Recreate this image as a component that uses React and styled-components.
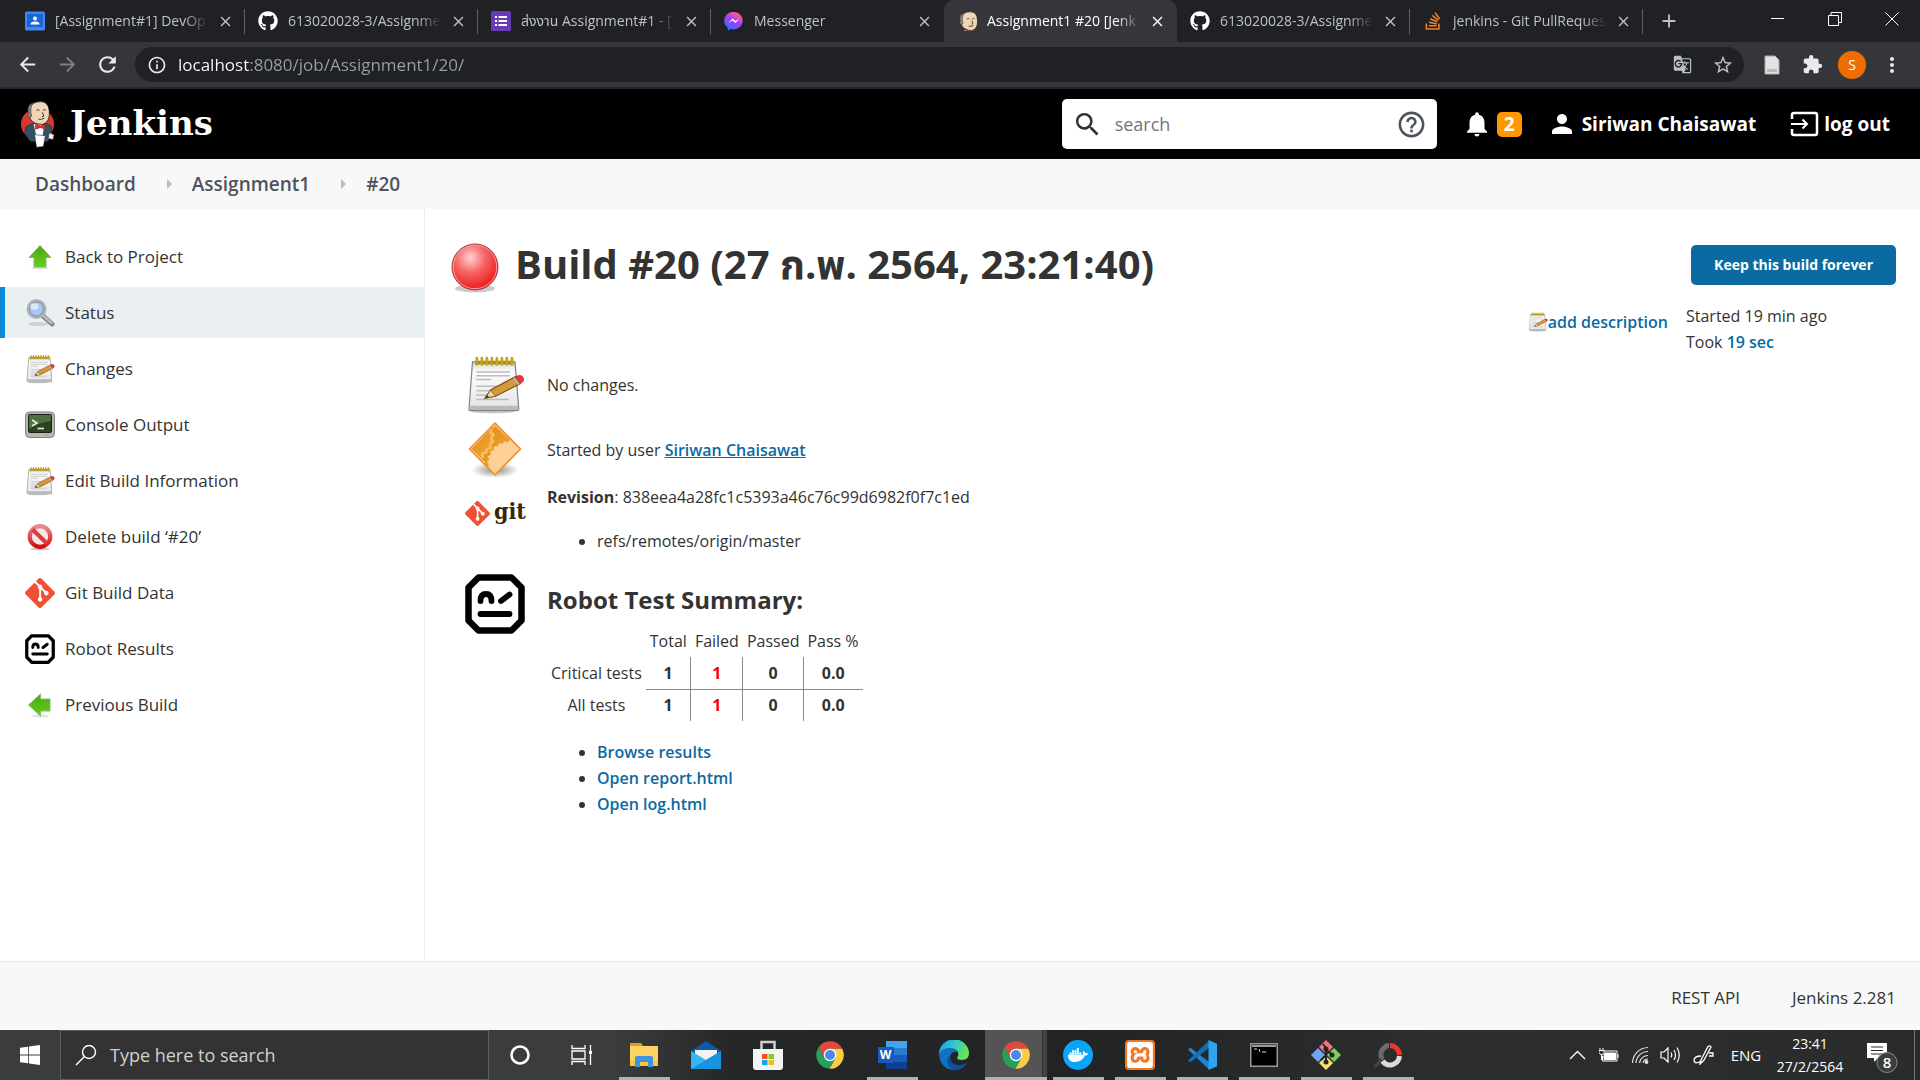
import React from "react";
import styled, { createGlobalStyle, css } from "styled-components";
import { FaGithub, FaStackOverflow, FaDocker } from "react-icons/fa";
import {
  MdGTranslate,
  MdStarBorder,
  MdExtension,
  MdMoreVert,
  MdNotifications,
  MdPerson,
  MdHelpOutline,
  MdSearch,
  MdClose,
  MdAdd,
  MdArrowBack,
  MdArrowForward,
  MdRefresh,
  MdInfoOutline,
} from "react-icons/md";
import { SiXampp, SiGit } from "react-icons/si";

const Global = createGlobalStyle`
  * { box-sizing: border-box; }
  body {
    margin: 0;
    background: #fff;
    color: #333;
    font-family: "Segoe UI", "Open Sans", "Noto Sans", "Noto Sans Thai", sans-serif;
    font-size: 16px;
    line-height: 26px;
  }
  button, input { font: inherit; color: inherit; border: 0; padding: 0; background: none; outline: 0; }
  button { cursor: pointer; }
  a { color: inherit; text-decoration: none; }
  ul, ol { margin: 0; padding: 0; list-style: none; }
  h1, h2, p { margin: 0; }
  svg { display: block; flex: none; }
`;

const Screen = styled.div`
  min-height: 100vh;
  display: flex;
  flex-direction: column;
`;

/* ---------- Browser chrome ---------- */

const TabStrip = styled.div`
  display: flex;
  height: 42px;
  padding-left: 12px;
  background: #202124;
`;

const Tab = styled.div`
  display: flex;
  align-items: center;
  flex: 0 1 233px;
  min-width: 0;
  padding: 0 12px 0 13px;
  background: linear-gradient(#5f6368, #5f6368) right center / 1px 25px no-repeat;
  color: #bdc1c6;
  ${(p) => p.$plain && css`background: none;`}
  ${(p) => p.$active && css`
    background: #35363a;
    color: #fff;
    border-radius: 10px 10px 0 0;
  `}
`;

const TabTitle = styled.button`
  flex: 1;
  min-width: 0;
  margin: 0 8px 0 10px;
  overflow: hidden;
  text-align: left;
  white-space: nowrap;
  font-size: 14px;
  mask-image: linear-gradient(90deg, #000 84%, transparent);
`;

const IconButton = styled.button`
  display: grid;
  place-items: center;
  width: ${(p) => p.$w || 16}px;
  flex: none;
`;

const NewTab = styled(IconButton)`
  margin-left: 14px;
  width: 24px;
  color: #bdc1c6;
`;

const WindowControls = styled.div`
  display: flex;
  margin-left: auto;
  color: #fff;
  button { width: 57px; padding-bottom: 4px; }
`;

const Toolbar = styled.div`
  display: flex;
  align-items: center;
  height: 47px;
  padding: 0 16px 0 14px;
  background: #35363a;
  border-bottom: 2px solid #27282b;
  color: #e8eaed;
`;

const NavButtons = styled.div`
  display: flex;
  gap: 13px;
  margin-right: 14px;
  button { width: 27px; }
  button:nth-child(2) { color: #7d7f83; }
`;

const Omnibox = styled.label`
  display: flex;
  align-items: center;
  flex: 1;
  height: 35px;
  padding: 0 12px;
  border-radius: 18px;
  background: #202124;
`;

const UrlInput = styled.input`
  flex: 1;
  margin-left: 11px;
  font-size: 17px;
  color: transparent;
  background: linear-gradient(90deg, #fff 72px, #9aa0a6 72px);
  background-clip: text;
  -webkit-background-clip: text;
`;

const OmniActions = styled.div`
  display: flex;
  gap: 20px;
  color: #bdc1c6;
  button { width: 20px; }
`;

const Extensions = styled.div`
  display: flex;
  align-items: center;
  gap: 16px;
  margin-left: 16px;
  button { width: 24px; }
`;

const Avatar = styled.button`
  height: 28px;
  margin: 0 -2px;
  border-radius: 50%;
  background: #ef6c00;
  color: #fff;
  font-size: 14px;
  && { width: 28px; }
`;

/* ---------- Jenkins header ---------- */

const Header = styled.header`
  display: flex;
  align-items: center;
  height: 70px;
  padding: 0 30px 0 20px;
  background: #000;
  color: #fff;
  font-size: 19px;
  font-weight: 700;
`;

const Logo = styled.a`
  display: flex;
  align-items: center;
  gap: 14px;
  margin-right: auto;
  font: 700 34px/44px "DejaVu Serif", serif;
  span { padding-bottom: 2px; }
`;

const SearchBox = styled.label`
  display: flex;
  align-items: center;
  width: 375px;
  height: 50px;
  margin-right: 25px;
  padding: 0 10px;
  border-radius: 5px;
  background: #fff;
  color: #333;
  font-size: 18px;
  font-weight: 400;
  input { flex: 1; min-width: 0; margin: 0 12px; }
  input::placeholder { color: #757575; opacity: 1; }
`;

const HeaderLink = styled.a`
  display: flex;
  align-items: center;
  gap: ${(p) => p.$gap || 5}px;
  margin-left: ${(p) => p.$ml || 0}px;
  white-space: nowrap;
`;

const Badge = styled.span`
  width: 25px;
  height: 25px;
  border-radius: 5px;
  background: #ff9800;
  line-height: 25px;
  text-align: center;
`;

const Breadcrumbs = styled.ol`
  display: flex;
  align-items: center;
  height: 50px;
  padding-left: 35px;
  background: #f8f8f8;
  color: #4d545d;
  font-size: 19px;
  font-weight: 600;
  li { display: flex; align-items: center; }
  li + li::before {
    content: "";
    margin: 0 20px 0 31px;
    border: 5px solid transparent;
    border-left-color: #bbb;
    border-right-width: 0;
  }
`;

/* ---------- Page body ---------- */

const Body = styled.div`
  display: flex;
  flex: 1;
`;

const Side = styled.nav`
  width: 425px;
  flex: none;
  padding-top: 22px;
  border-right: 1px solid #eaeff2;
`;

const SideList = styled.ul`
  display: grid;
  gap: 5px;
`;

const Task = styled.a`
  display: flex;
  align-items: center;
  gap: 10px;
  height: 51px;
  padding-left: 20px;
  border-left: 5px solid transparent;
  font-size: 17px;
  ${(p) => p.$active && css`
    background: #eaeff2;
    border-left-color: #0b8bd8;
  `}
`;

const Main = styled.main`
  flex: 1;
  min-width: 0;
  padding: 34px 24px 60px 26px;
`;

const TitleRow = styled.div`
  display: flex;
  align-items: flex-start;
  justify-content: space-between;
`;

const Title = styled.h1`
  display: flex;
  gap: 16px;
  font-size: 40px;
  font-weight: 700;
  line-height: 42px;
`;

const BuildActions = styled.div`
  display: flex;
  flex-direction: column;
  align-items: flex-end;
  gap: 18px;
  padding-top: 2px;
`;

const KeepButton = styled.button`
  height: 40px;
  padding: 0 23px;
  border-radius: 5px;
  background: #0b6aa2;
  color: #fff;
  font-size: 14px;
  font-weight: 700;
`;

const Meta = styled.div`
  display: flex;
  gap: 18px;
`;

const Timing = styled.div`
  width: 210px;
`;

const Link = styled.a`
  color: #0b6aa2;
  font-weight: 600;
  text-decoration: ${(p) => (p.$underline ? "underline" : "none")};
`;

const AddDescription = styled(Link)`
  display: flex;
  align-items: center;
  height: 38px;
`;

const Summary = styled.section`
  display: grid;
  grid-template-columns: 60px 1fr;
  column-gap: 22px;
  align-items: ${(p) => (p.$top ? "start" : "center")};
  margin: ${(p) => p.$mt || 0}px 0 0 14px;
`;

const Bullets = styled.ul`
  margin-top: 18px;
  padding-left: 50px;
  list-style: disc;
`;

const GitMark = styled.div`
  display: flex;
  align-items: center;
  height: 58px;
  gap: 4px;
  color: #362701;
  font: 700 23px/30px "DejaVu Serif Condensed", "DejaVu Serif", serif;
  span { padding-bottom: 4px; }
`;

const SubTitle = styled.h2`
  padding-top: 8px;
  font-size: 24px;
  font-weight: 700;
  line-height: 36px;
`;

const Results = styled.table`
  margin-top: 7px;
  border-collapse: collapse;
  text-align: center;
  th { padding: 0 4px; font-weight: 400; height: 32px; }
  td { padding: 0 4px; font-weight: 700; height: 32px; }
  td + td { border-left: 1px solid #888; }
  tbody tr:first-child td { border-bottom: 1px solid #888; }
`;

const FailCell = styled.td`
  color: #f00;
`;

const Footer = styled.footer`
  display: flex;
  justify-content: flex-end;
  align-items: center;
  gap: 52px;
  height: 69px;
  padding: 4px 24px 0 0;
  border-top: 1px solid #e8e8e8;
  background: #f8f8f8;
  font-size: 17px;
`;

/* ---------- Windows taskbar ---------- */

const Taskbar = styled.div`
  display: flex;
  height: 50px;
  background: linear-gradient(90deg, #3b3d3d 0, #3b3d3d 32%, #262727 38%, #222324 55%, #2c2d2d 75%, #2a2c2c);
  color: #fff;
`;

const StartButton = styled(IconButton)`
  width: 60px;
`;

const TaskSearch = styled.label`
  display: flex;
  align-items: center;
  gap: 13px;
  width: 429px;
  padding-left: 14px;
  background: #333;
  border: 1px solid #5d5d5d;
  font-size: 18px;
  input { flex: 1; }
  input::placeholder { color: #d0d0d0; opacity: 1; }
`;

const TaskButton = styled.button`
  display: grid;
  place-items: center;
  flex: 0 0 62px;
  ${(p) => p.$open && css`
    background: linear-gradient(#b4b0ae, #b4b0ae) center bottom / 51px 3px no-repeat;
  `}
  ${(p) => p.$active && css`
    background: linear-gradient(90deg, #545454 57px, #303030 57px, #303030 58px, #434343 58px);
    border-bottom: 3px solid #b4b0ae;
    padding-top: 3px;
  `}
`;

const Tray = styled.div`
  display: flex;
  align-items: center;
  margin-left: auto;
  font-size: 15px;
`;

const TrayButton = styled.button`
  display: grid;
  place-items: center;
  width: ${(p) => p.$w || 31}px;
`;

const Clock = styled.time`
  width: 80px;
  text-align: center;
  line-height: 23px;
  font-size: 14px;
`;

const ShowDesktop = styled.button`
  width: 6px;
  height: 50px;
  border-left: 1px solid #777;
`;

/* ---------- Drawings ---------- */

const Notepad = ({ size = 30 }) => (
  <svg width={size} height={size} viewBox="0 1 48 48">
    <defs>
      <linearGradient id="paper" x1="0" y1="0" x2="0" y2="1">
        <stop offset="0" stopColor="#d6d6d6" />
        <stop offset="0.2" stopColor="#fcfcfc" />
        <stop offset="1" stopColor="#e4e4e4" />
      </linearGradient>
    </defs>
    <ellipse cx="22" cy="46" rx="17" ry="1.8" fill="#000" opacity="0.2" />
    <path d="M6 6.500h34l3 37.500q.2 1.500-1.300 1.500H4.500q-1.500 0-1.300-1.500z" fill="url(#paper)" stroke="#858585" />
    <path d="M3.800 41.500h38.600l.3 3.500H3.500z" fill="#b9b9b9" />
    <g stroke="#bcbcbc" strokeWidth="1.200">
      <path d="M9 14.500h27M9 17.500h27M9 20.500h12M9 26h20M9 29.500h15M9 33h13M9 36.500h26" />
    </g>
    <path d="M8 5.500h31v3H8z" fill="#9f8d20" />
    <g stroke="#c2a51d" strokeWidth="2.200" strokeLinecap="round">
      <path d="M9.500 3.500v5M13.500 3.500v5M17.500 3.500v5M21.500 3.500v5M25.500 3.500v5M29.500 3.500v5M33.500 3.500v5M37.500 3.500v5" />
    </g>
    <path d="M16 35.500l4.500-6.500L40 18.500l4 5.500-19.500 10z" fill="#d29a3c" stroke="#80520d" />
    <path d="M20.500 29l4 5-8.500 1.500z" fill="#ecd3a5" stroke="#80520d" strokeWidth=".6" />
    <path d="M16 35.500l1.800-2.600 1.500 1.900z" fill="#333" />
    <path d="M38.500 19.300l4 5.500 1.500-.8-4-5.500z" fill="#bbb" />
    <path d="M40 18.500q5-2.500 6.500.5t-2.500 5z" fill="#df3b33" stroke="#a22" strokeWidth=".5" />
  </svg>
);

const GreenArrow = ({ left }) => (
  <svg width="30" height="30" viewBox="0 0 30 30">
    <defs>
      <linearGradient id={left ? "greenL" : "greenU"} x1={left ? 1 : 0} y1="0" x2={left ? 0 : 0} y2={left ? 0 : 1}>
        <stop offset="0" stopColor="#4fa618" />
        <stop offset="1" stopColor="#62cf18" />
      </linearGradient>
    </defs>
    <ellipse cx="15" cy="26" rx="9" ry="1.500" fill="#000" opacity="0.12" />
    <path
      d="M15 3.500L26 15.500H21V25H9V15.500H4z"
      fill={left ? "url(#greenL)" : "url(#greenU)"}
      stroke="#83bd68"
      transform={left ? "rotate(-90 15 15)" : undefined}
    />
  </svg>
);

const Magnifier = () => (
  <svg width="30" height="30" viewBox="0 0 30 30">
    <ellipse cx="13" cy="26" rx="10" ry="2" fill="#000" opacity="0.12" />
    <path d="M18 18l9 8" stroke="#848484" strokeWidth="5" strokeLinecap="round" />
    <path d="M18.500 18l8 7" stroke="#bdbdbd" strokeWidth="2.500" strokeLinecap="round" />
    <circle cx="11.500" cy="11" r="8.500" fill="#a9c8ee" stroke="#b3b3b3" strokeWidth="3" />
    <circle cx="11.500" cy="11" r="7" fill="none" stroke="#6d93c7" />
    <ellipse cx="9.500" cy="8.500" rx="4" ry="3.200" fill="#dbe9fa" />
  </svg>
);

const ConsoleIcon = () => (
  <svg width="30" height="30" viewBox="0 0 30 30">
    <rect x="0.500" y="2" width="29" height="25.500" rx="4" fill="#b7b8b3" stroke="#85867f" />
    <rect x="3.500" y="4.500" width="23" height="18" rx="1" fill="#2c4222" stroke="#1b2117" />
    <path d="M4 5h22v6q-12 1-22 8z" fill="#52703f" />
    <path d="M7 10l5 3-5 3" fill="none" stroke="#e6f0e0" strokeWidth="1.600" />
    <path d="M12.500 18.500h6.500" stroke="#e6f0e0" strokeWidth="1.600" />
    <path d="M20 25h3" stroke="#7ac143" />
  </svg>
);

const Forbidden = () => (
  <svg width="30" height="30" viewBox="0 0 30 30">
    <defs>
      <linearGradient id="ban" x1="0" y1="0" x2="0" y2="1">
        <stop offset="0" stopColor="#ee8a8a" />
        <stop offset="1" stopColor="#d30d0d" />
      </linearGradient>
    </defs>
    <ellipse cx="15" cy="27" rx="10" ry="1.500" fill="#000" opacity="0.2" />
    <circle cx="15" cy="14.500" r="10.300" fill="#f3e6e6" stroke="url(#ban)" strokeWidth="4.200" />
    <path d="M7.500 7.500l15 14.500" stroke="#dd3b3b" strokeWidth="4" />
  </svg>
);

const GitDiamond = ({ size = 30 }) => <SiGit size={size} color="#f05033" />;

const RobotFace = ({ size = 30 }) => (
  <svg width={size} height={size} viewBox="0 0 60 60" fill="none" stroke="#000">
    <path d="M13.500 3.500h33l10 10v33l-10 10h-33l-10-10v-33z" fill="#fff" strokeWidth="6.500" strokeLinejoin="round" />
    <path d="M15.500 27q0-7 5.500-7t5.500 7M36 27l8.500-6.500M15.500 40h29" strokeWidth="5.800" strokeLinecap="round" />
  </svg>
);

const RedBall = () => (
  <svg width="48" height="50" viewBox="0 0 48 50">
    <defs>
      <radialGradient id="ball" cx="0.400" cy="0.300" r="0.650">
        <stop offset="0" stopColor="#ffd2d2" />
        <stop offset="0.500" stopColor="#f76565" />
        <stop offset="1" stopColor="#ef2323" />
      </radialGradient>
    </defs>
    <ellipse cx="24" cy="45.500" rx="20" ry="4" fill="#000" opacity="0.200" />
    <circle cx="24" cy="24" r="23" fill="url(#ball)" stroke="#a33a3a" />
    <circle cx="24" cy="24" r="21.700" fill="none" stroke="#ff9b9b" />
  </svg>
);

const OrangeDiamond = () => (
  <svg width="60" height="60" viewBox="0 0 60 60">
    <defs>
      <radialGradient id="shade">
        <stop offset="0" stopColor="#000" stopOpacity=".45" />
        <stop offset="1" stopColor="#000" stopOpacity="0" />
      </radialGradient>
      <linearGradient id="amber" x1="0" y1="0" x2="1" y2="1">
        <stop offset="0" stopColor="#e08e12" />
        <stop offset="1" stopColor="#f0a63c" />
      </linearGradient>
    </defs>
    <ellipse cx="30" cy="50" rx="24" ry="8" fill="url(#shade)" />
    <path d="M30 3L55.500 29 30 55 4.500 29z" fill="#fcd193" stroke="#ee8f25" strokeWidth="1.600" strokeLinejoin="round" />
    <path d="M28 6.500L6.500 29l10 9.500 2-4 3.500 0 0-4 4-1-1-4 3.500-2-2-3.500 3-2.500-2.500-3 2.500-3z" fill="url(#amber)" />
    <path d="M30 5.500l15 14.500-2.500 2.500-3-1.500-2 3-3.500-1-1 3.500-4 0 0 3.500-4 1 1 3.500-3.500 2 2 3-2.500 2.500 2 3-2 3-3-3 1-3.500-3.500-2 2.500-3-1.500-3.500 4-1 0-4 4-1-1-4 4-2-2-4 3-2.500-2-3.500z" fill="url(#amber)" />
    <path d="M26.500 9.500l-1 3 2.500 3-2 3 2 3-3 2.500 1 3.500-4 1.500-.5 3.500-3.500.5-1.500 3.500" fill="none" stroke="#f7bd66" strokeWidth="2.500" />
  </svg>
);

const Butler = ({ head, w = 36, h = 48 }) => (
  <svg width={w} height={h} viewBox={head ? "5 0 24 25" : "0 0 37 48"}>
    {!head && <ellipse cx="18" cy="24" rx="17" ry="16" fill="#d33833" />}
    <path d="M6 27l8-4 6 5 6-5 6 3 1 10-5 6H11q-5-5-6-9z" fill="#335061" stroke="#1d2a33" strokeWidth=".7" />
    <path d="M14 24l3 13h6l2-12z" fill="#fff" />
    <path d="M10 8q2-7 11-7 8 0 9 9 1 10-4 13-3 2.500-7 1-7-1-9-7z" fill="#f0d6b7" stroke="#1d1d1d" strokeWidth=".8" />
    <path d="M8.500 12q-2-7 5-10-4 6-1.500 14l-2 1z" fill="#8a8175" stroke="#333" strokeWidth=".6" />
    <path d="M9 12.500q-2 2 1 5" fill="#f0d6b7" stroke="#333" strokeWidth=".7" />
    <path d="M17 10q1.500-1.500 3 0M23.500 10q1.500-1.500 3 0M23 12l1.500 4-2 .5M19 19q3 1 6-1" fill="none" stroke="#333" />
    <path d="M16 24l5 2 5-2v5.500l-5-2-5 2z" fill="#e0312b" stroke="#7a1512" strokeWidth=".6" />
    {!head && <path d="M15 35l11 1-2 11-7 1z" fill="#fff" stroke="#333" strokeWidth=".6" />}
    {!head && <path d="M30 33l5 2-1 5-5-1z" fill="#eee" stroke="#333" strokeWidth=".6" />}
  </svg>
);

const LogOutIcon = () => (
  <svg width="29" height="26" viewBox="0 0 29 26" fill="none" stroke="#fff" strokeWidth="2.500">
    <path d="M2 8V4q0-2 2-2h21q2 0 2 2v18q0 2-2 2H4q-2 0-2-2v-4" />
    <path d="M1 13h16M12.500 8.500L17 13l-4.500 4.500" strokeWidth="2" />
  </svg>
);

const Classroom = () => (
  <svg width="20" height="20" viewBox="0 0 20 20">
    <rect width="20" height="19" y=".5" rx="1.500" fill="#4285f4" />
    <path d="M2 3h16v13H2z" fill="#1967d2" />
    <circle cx="10" cy="7.500" r="2" fill="#fff" />
    <path d="M5.500 13.500q0-3 4.500-3t4.500 3z" fill="#fff" />
  </svg>
);

const Forms = () => (
  <svg width="20" height="20" viewBox="0 0 20 20">
    <rect width="20" height="20" rx="1.500" fill="#673ab7" />
    <path d="M4 6h2M4 10h2M4 14h2M7.500 6H16M7.500 10H16M7.500 14H16" stroke="#fff" strokeWidth="2" />
  </svg>
);

const Messenger = () => (
  <svg width="20" height="20" viewBox="0 0 20 20">
    <defs>
      <linearGradient id="msg" x1="0" y1="1" x2=".6" y2="0">
        <stop offset="0" stopColor="#0a84ff" />
        <stop offset=".6" stopColor="#a33bff" />
        <stop offset="1" stopColor="#ff5c87" />
      </linearGradient>
    </defs>
    <path d="M10 1a9 8.700 0 1 1-3 17l-3 1.500-.3-3A9 8.700 0 0 1 10 1z" fill="url(#msg)" />
    <path d="M4.500 12l4-4.500 3 2.500 4-2.500-4 4.500-3-2.500z" fill="#fff" />
  </svg>
);

const ChromeIcon = () => (
  <svg width="30" height="30" viewBox="0 0 48 48">
    <path d="M5.540 12.030A22 22 0 0 1 43.600 14L24 14v10l-8.660 5z" fill="#dd4b3e" />
    <path d="M43.600 14A22 22 0 0 1 22.860 45.970L32.660 29 24 24V14z" fill="#fdcc45" />
    <path d="M22.860 45.970A22 22 0 0 1 5.540 12.030L15.340 29 24 24l8.660 5z" fill="#26a15b" />
    <circle cx="24" cy="24" r="10" fill="#fff" />
    <circle cx="24" cy="24" r="8" fill="#4b87f0" />
  </svg>
);

const WindowsLogo = () => (
  <svg width="20" height="20" viewBox="0 0 20 20" fill="#fff">
    <path d="M0 2.800L8.200 1.700v7.800H0zM9 1.600L20 0v9.500H9zM0 10.500h8.200v7.800L0 17.200zM9 10.500h11V20L9 18.400z" />
  </svg>
);

const Explorer = () => (
  <svg width="30" height="26" viewBox="0 0 30 26">
    <path d="M1 1h11l2 3h-2v4H1z" fill="#e09f0c" />
    <path d="M1 4h28v20H1z" fill="#ffd362" />
    <path d="M1 19h28v5H1z" fill="#fcc63f" />
    <path d="M6 25V16q0-2 2-2h14q2 0 2 2v9h-5v-5h-8v5z" fill="#3f94dc" />
  </svg>
);

const Mail = () => (
  <svg width="30" height="28" viewBox="0 0 30 28">
    <path d="M0 10L15 0l15 10v4H0z" fill="#0a5aa8" />
    <path d="M4 9h22v10H4z" fill="#f3f3f3" />
    <path d="M0 10l15 9 15-9v18H0z" fill="#35b5f2" />
    <path d="M0 28l15-9 15-9v18z" fill="#1b94e0" />
  </svg>
);

const Store = () => (
  <svg width="30" height="30" viewBox="0 0 30 30">
    <path d="M8.500 10V2h13v8" fill="none" stroke="#d0d0d0" strokeWidth="2.500" />
    <path d="M0 9h30v18q0 3-3 3H3q-3 0-3-3z" fill="#f3f3f3" />
    <path d="M9 14h5.500v5H9z" fill="#f1511b" />
    <path d="M15.500 14H21v5h-5.500z" fill="#80cc28" />
    <path d="M9 20h5.500v5H9z" fill="#00adef" />
    <path d="M15.500 20H21v5h-5.500z" fill="#fbbc09" />
  </svg>
);

const WordBox = styled.span`
  display: flex;
  align-items: center;
  width: 29px;
  height: 28px;
  background: linear-gradient(90deg, transparent 8px, #41a5ee 8px) 0 0 / 100% 7px no-repeat,
    linear-gradient(90deg, transparent 8px, #2b7cd3 8px) 0 7px / 100% 7px no-repeat,
    linear-gradient(90deg, transparent 8px, #185abd 8px) 0 14px / 100% 7px no-repeat,
    linear-gradient(90deg, transparent 8px, #103f91 8px) 0 21px / 100% 7px no-repeat;
  span {
    width: 16px;
    background: #185abd;
    color: #fff;
    font-size: 12px;
    font-weight: 700;
    line-height: 16px;
    text-align: center;
  }
`;

const Edge = () => (
  <svg width="30" height="30" viewBox="0 0 30 30">
    <defs>
      <linearGradient id="edge" x1="0" y1="0" x2="1" y2=".3">
        <stop offset="0" stopColor="#2397df" />
        <stop offset=".5" stopColor="#2fc5d5" />
        <stop offset="1" stopColor="#66e35c" />
      </linearGradient>
    </defs>
    <path d="M0 14A15 14.500 0 0 1 30 13.500q0 6-7 6.500-5 0-5-2.500 2-2 1-5Q17 8 11 8.500 3 9 0 14z" fill="url(#edge)" />
    <path d="M0 14q3-6 10-6 6 0 8.500 4Q12 11 11 17q0 8 8 9 5 0 9-3-4 7-13 7Q1 29 0 14z" fill="#1270c4" />
    <path d="M11 16q0 7 6 8.500t11-1.500q-4 7-13 7-7-3-7-9 1-4 3-5z" fill="#0c4f9c" />
  </svg>
);

const AppTile = styled.span`
  display: grid;
  place-items: center;
  width: 30px;
  height: 30px;
  border-radius: ${(p) => p.$r || "50%"};
  background: ${(p) => p.$bg};
  color: #fff;
`;

const VsCode = () => (
  <svg width="30" height="30" viewBox="0 0 30 30">
    <path d="M1 9.500l2.500-1.700L22 22v7.500z" fill="#1b86d4" />
    <path d="M1 20.500l2.500 1.700L22 8V.5z" fill="#0f6fb8" />
    <path d="M21.500 0L30 3.700v22.600L21.500 30z" fill="#2aa5f0" />
  </svg>
);

const Cmd = () => (
  <svg width="28" height="24" viewBox="0 0 28 24">
    <rect x=".75" y=".75" width="26.500" height="22.500" fill="#000" stroke="#999" strokeWidth="1.500" />
    <path d="M2 3h24" stroke="#ccc" strokeWidth="1.500" />
    <path d="M4 6h3M9 6l1 3M12 9h4" stroke="#ddd" />
  </svg>
);

const GitBash = () => (
  <svg width="30" height="30" viewBox="0 0 30 30">
    <path d="M15 0l7 7-7 7-7-7z" fill="#f2747c" />
    <path d="M30 15l-7 7-7-7 7-7z" fill="#80cc5e" />
    <path d="M15 30l-7-7 7-7 7 7z" fill="#f8dd74" />
    <path d="M0 15l7-7 7 7-7 7z" fill="#71a5f5" />
    <path d="M12 4l3 4v15M15 10l7 5M14 16l-4 4" stroke="#252525" strokeWidth="2" fill="none" />
    <g fill="#252525"><circle cx="15" cy="9" r="2.500" /><circle cx="21" cy="15" r="2.500" /><circle cx="15" cy="22" r="2.500" /></g>
  </svg>
);

const Ring = () => (
  <svg width="30" height="30" viewBox="0 0 30 30" fill="none">
    <path d="M17 5.500a9.500 10 0 0 1 9.500 9.500" stroke="#e8362b" strokeWidth="5" />
    <path d="M26.500 16a9.500 10 0 0 1-17 5" stroke="#dadada" strokeWidth="5" />
    <path d="M9 20q-3-8 2-12 2-2.500 5-2.500" stroke="#6b6b6b" strokeWidth="5" />
    <path d="M1 26q5 0 6-8" stroke="#444" strokeWidth="3" />
  </svg>
);

const Cortana = () => (
  <svg width="22" height="22" viewBox="0 0 22 22">
    <circle cx="11" cy="11" r="8.500" fill="none" stroke="#fff" strokeWidth="2.600" />
  </svg>
);

const TaskView = () => (
  <svg width="22" height="20" viewBox="0 0 22 20" fill="none" stroke="#fff" strokeWidth="1.300">
    <path d="M1 0v3.500h13V0M1 20v-3.500h13V20M1 6h13v8H1zM19.500 0v20" />
    <path d="M18 6h3v3h-3z" fill="#fff" stroke="none" />
  </svg>
);

const Battery = () => (
  <svg width="20" height="16" viewBox="0 0 20 16" fill="none" stroke="#fff">
    <path d="M5 4h13v10H3.500V9" />
    <path d="M6 6h10.500v6.500H5V8z" fill="#fff" />
    <path d="M19 7v4M1 1v2M4 1v2M0 3.500h5v2l-1.500 2h-2L0 5.500zM2.500 8v5" />
  </svg>
);

const Wifi = () => (
  <svg width="18" height="18" viewBox="0 0 18 18" fill="none" stroke="#ddd" strokeWidth="1.200">
    <path d="M1.500 17A16 16 0 0 1 17 1.500M5 17A12 12 0 0 1 17 5.500M8.500 17A8.500 8.500 0 0 1 17 9.500M12 17a5 5 0 0 1 5-4" />
    <circle cx="15.500" cy="16" r="1.300" fill="#fff" />
  </svg>
);

const Volume = () => (
  <svg width="21" height="18" viewBox="0 0 21 18" fill="none" stroke="#fff" strokeWidth="1.200">
    <path d="M1 6h3l4-4v14l-4-4H1zM11 6.500q1.500 2.500 0 5M14 4q3 5 0 10M17 1.500q4.500 7.500 0 15" />
  </svg>
);

const Pen = () => (
  <svg width="22" height="20" viewBox="0 0 22 20" fill="none" stroke="#fff" strokeWidth="1.300">
    <path d="M8 15L15 1.500q2-1.500 3 .5L11 15l-4 4zM16 8h4v3h-4M8 11q-7 0-7 4.500 1 4 6 1" />
  </svg>
);

const Notice = () => (
  <svg width="31" height="36" viewBox="0 -6 31 36">
    <path d="M0 0h20v15h-9l-4 4v-4H0z" fill="#fff" />
    <path d="M4 4h12M4 7.500h12M4 11h12" stroke="#2a2a2a" />
    <circle cx="20" cy="19.500" r="10" fill="#3c3d3d" stroke="#8a8a8a" />
    <text x="20" y="25" textAnchor="middle" fontSize="15" fontWeight="600" fill="#fff">8</text>
  </svg>
);

const DocIcon = () => (
  <svg width="16" height="20" viewBox="0 0 16 20">
    <path d="M1 1h10l4 4v14H1z" fill="#e3e3e3" stroke="#aaa" />
    <path d="M3 14h10v3H3z" fill="#bbb" />
  </svg>
);

/* ---------- Data ---------- */

const tabs = [
  { icon: <Classroom />, title: "[Assignment#1] DevOp" },
  { icon: <FaGithub size={20} color="#fff" />, title: "613020028-3/Assignme" },
  { icon: <Forms />, title: "ส่งงาน Assignment#1 - [" },
  { icon: <Messenger />, title: "Messenger", plain: true },
  { icon: <Butler head w={20} h={20} />, title: "Assignment1 #20 [Jenk", active: true },
  { icon: <FaGithub size={20} color="#fff" />, title: "613020028-3/Assignme" },
  { icon: <FaStackOverflow size={20} color="#f48024" />, title: "jenkins - Git PullReques" },
];

const tasks = [
  { icon: <GreenArrow />, label: "Back to Project" },
  { icon: <Magnifier />, label: "Status", active: true },
  { icon: <Notepad />, label: "Changes" },
  { icon: <ConsoleIcon />, label: "Console Output" },
  { icon: <Notepad />, label: "Edit Build Information" },
  { icon: <Forbidden />, label: "Delete build ‘#20’" },
  { icon: <GitDiamond />, label: "Git Build Data" },
  { icon: <RobotFace />, label: "Robot Results" },
  { icon: <GreenArrow left />, label: "Previous Build" },
];

const apps = [
  { name: "Cortana", icon: <Cortana /> },
  { name: "Task View", icon: <TaskView /> },
  { name: "File Explorer", icon: <Explorer />, open: true },
  { name: "Mail", icon: <Mail /> },
  { name: "Store", icon: <Store /> },
  { name: "Chrome", icon: <ChromeIcon /> },
  { name: "Word", icon: <WordBox><span>W</span></WordBox>, open: true },
  { name: "Edge", icon: <Edge /> },
  { name: "Chrome window", icon: <ChromeIcon />, active: true },
  { name: "Docker", icon: <AppTile $bg="#0aa5f7"><FaDocker size={20} /></AppTile>, open: true },
  { name: "XAMPP", icon: <AppTile $bg="#f37623" $r="4px"><SiXampp size={26} /></AppTile>, open: true },
  { name: "Visual Studio Code", icon: <VsCode />, open: true },
  { name: "Command Prompt", icon: <Cmd />, open: true },
  { name: "Git Bash", icon: <GitBash />, open: true },
  { name: "Robot", icon: <Ring />, open: true },
];

const results = [
  ["Critical tests", 1, 1, 0, "0.0"],
  ["All tests", 1, 1, 0, "0.0"],
];

export default function App() {
  return (
    <Screen>
      <Global />
      <TabStrip>
        {tabs.map((t, i) => (
          <Tab key={i} $active={t.active} $plain={t.plain}>
            {t.icon}
            <TabTitle>{t.title}</TabTitle>
            <IconButton aria-label="Close tab"><MdClose size={17} /></IconButton>
          </Tab>
        ))}
        <NewTab aria-label="New tab"><MdAdd size={22} /></NewTab>
        <WindowControls>
          <IconButton aria-label="Minimize"><svg width="13" height="13" viewBox="0 0 13 13"><path d="M0 5.500h13" stroke="#fff" /></svg></IconButton>
          <IconButton aria-label="Restore"><svg width="14" height="14" viewBox="0 0 14 14" fill="none" stroke="#fff"><path d="M.5 3.500h10v10H.500zM3 3.500v-3h10.500v10h-3" /></svg></IconButton>
          <IconButton aria-label="Close"><svg width="14" height="14" viewBox="0 0 14 14"><path d="M.5.5l13 13M13.500.5l-13 13" stroke="#fff" /></svg></IconButton>
        </WindowControls>
      </TabStrip>
      <Toolbar>
        <NavButtons>
          <IconButton aria-label="Back"><MdArrowBack size={23} /></IconButton>
          <IconButton aria-label="Forward"><MdArrowForward size={23} /></IconButton>
          <IconButton aria-label="Reload"><MdRefresh size={25} /></IconButton>
        </NavButtons>
        <Omnibox>
          <MdInfoOutline size={20} />
          <UrlInput aria-label="Address" defaultValue="localhost:8080/job/Assignment1/20/" />
          <OmniActions>
            <IconButton aria-label="Translate"><MdGTranslate size={19} /></IconButton>
            <IconButton aria-label="Bookmark"><MdStarBorder size={22} /></IconButton>
          </OmniActions>
        </Omnibox>
        <Extensions>
          <IconButton aria-label="Document extension"><DocIcon /></IconButton>
          <IconButton aria-label="Extensions"><MdExtension size={21} /></IconButton>
          <Avatar aria-label="Profile">S</Avatar>
          <IconButton aria-label="Menu"><MdMoreVert size={24} /></IconButton>
        </Extensions>
      </Toolbar>

      <Header>
        <Logo href="#"><Butler /><span>Jenkins</span></Logo>
        <SearchBox>
          <MdSearch size={31} />
          <input aria-label="Search" placeholder="search" />
          <MdHelpOutline size={31} color="#4d545d" />
        </SearchBox>
        <HeaderLink href="#" aria-label="Notifications"><MdNotifications size={30} /><Badge>2</Badge></HeaderLink>
        <HeaderLink href="#" $ml={25}><MdPerson size={30} />Siriwan Chaisawat</HeaderLink>
        <HeaderLink href="#" $ml={34}><LogOutIcon />log out</HeaderLink>
      </Header>
      <Breadcrumbs>
        <li><a href="#">Dashboard</a></li>
        <li><a href="#">Assignment1</a></li>
        <li><a href="#">#20</a></li>
      </Breadcrumbs>

      <Body>
        <Side>
          <SideList>
            {tasks.map((t) => (
              <li key={t.label}><Task href="#" $active={t.active}>{t.icon}{t.label}</Task></li>
            ))}
          </SideList>
        </Side>
        <Main>
          <TitleRow>
            <Title><RedBall />Build #20 (27 ก.พ. 2564, 23:21:40)</Title>
            <BuildActions>
              <KeepButton>Keep this build forever</KeepButton>
              <Meta>
                <AddDescription href="#"><Notepad size={20} />add description</AddDescription>
                <Timing>
                  <div>Started 19 min ago</div>
                  <div>Took <Link href="#">19 sec</Link></div>
                </Timing>
              </Meta>
            </BuildActions>
          </TitleRow>

          <Summary>
            <Notepad size={60} />
            <p>No changes.</p>
          </Summary>
          <Summary $mt={5}>
            <OrangeDiamond />
            <p>Started by user <Link href="#" $underline>Siriwan Chaisawat</Link></p>
          </Summary>
          <Summary $mt={4} $top>
            <GitMark><GitDiamond size={25} /><span>git</span></GitMark>
            <div>
              <p><b>Revision</b>: 838eea4a28fc1c5393a46c76c99d6982f0f7c1ed</p>
              <Bullets><li>refs/remotes/origin/master</li></Bullets>
            </div>
          </Summary>
          <Summary $mt={20} $top>
            <RobotFace size={60} />
            <div>
              <SubTitle>Robot Test Summary:</SubTitle>
              <Results>
                <thead>
                  <tr><th /><th>Total</th><th>Failed</th><th>Passed</th><th>Pass %</th></tr>
                </thead>
                <tbody>
                  {results.map(([name, total, failed, passed, pct]) => (
                    <tr key={name}>
                      <th>{name}</th>
                      <td>{total}</td>
                      <FailCell>{failed}</FailCell>
                      <td>{passed}</td>
                      <td>{pct}</td>
                    </tr>
                  ))}
                </tbody>
              </Results>
              <Bullets>
                <li><Link href="#">Browse results</Link></li>
                <li><Link href="#">Open report.html</Link></li>
                <li><Link href="#">Open log.html</Link></li>
              </Bullets>
            </div>
          </Summary>
        </Main>
      </Body>
      <Footer>
        <a href="#">REST API</a>
        <a href="#">Jenkins 2.281</a>
      </Footer>

      <Taskbar>
        <StartButton aria-label="Start"><WindowsLogo /></StartButton>
        <TaskSearch>
          <svg width="22" height="22" viewBox="0 0 22 22" fill="none" stroke="#fff" strokeWidth="1.400"><circle cx="14" cy="8" r="6.500" /><path d="M9.500 12.500L1 21" /></svg>
          <input aria-label="Taskbar search" placeholder="Type here to search" />
        </TaskSearch>
        {apps.map((a) => (
          <TaskButton key={a.name} aria-label={a.name} $open={a.open} $active={a.active}>{a.icon}</TaskButton>
        ))}
        <Tray>
          <TrayButton aria-label="Show hidden icons"><svg width="17" height="10" viewBox="0 0 17 10"><path d="M1 9l7.500-7.500L16 9" fill="none" stroke="#fff" strokeWidth="1.300" /></svg></TrayButton>
          <TrayButton aria-label="Battery"><Battery /></TrayButton>
          <TrayButton aria-label="Network"><Wifi /></TrayButton>
          <TrayButton aria-label="Volume"><Volume /></TrayButton>
          <TrayButton $w={36} aria-label="Pen"><Pen /></TrayButton>
          <TrayButton $w={48}>ENG</TrayButton>
          <Clock>23:41<br />27/2/2564</Clock>
          <TrayButton $w={64} aria-label="Notification centre"><Notice /></TrayButton>
          <ShowDesktop aria-label="Show desktop" />
        </Tray>
      </Taskbar>
    </Screen>
  );
}
